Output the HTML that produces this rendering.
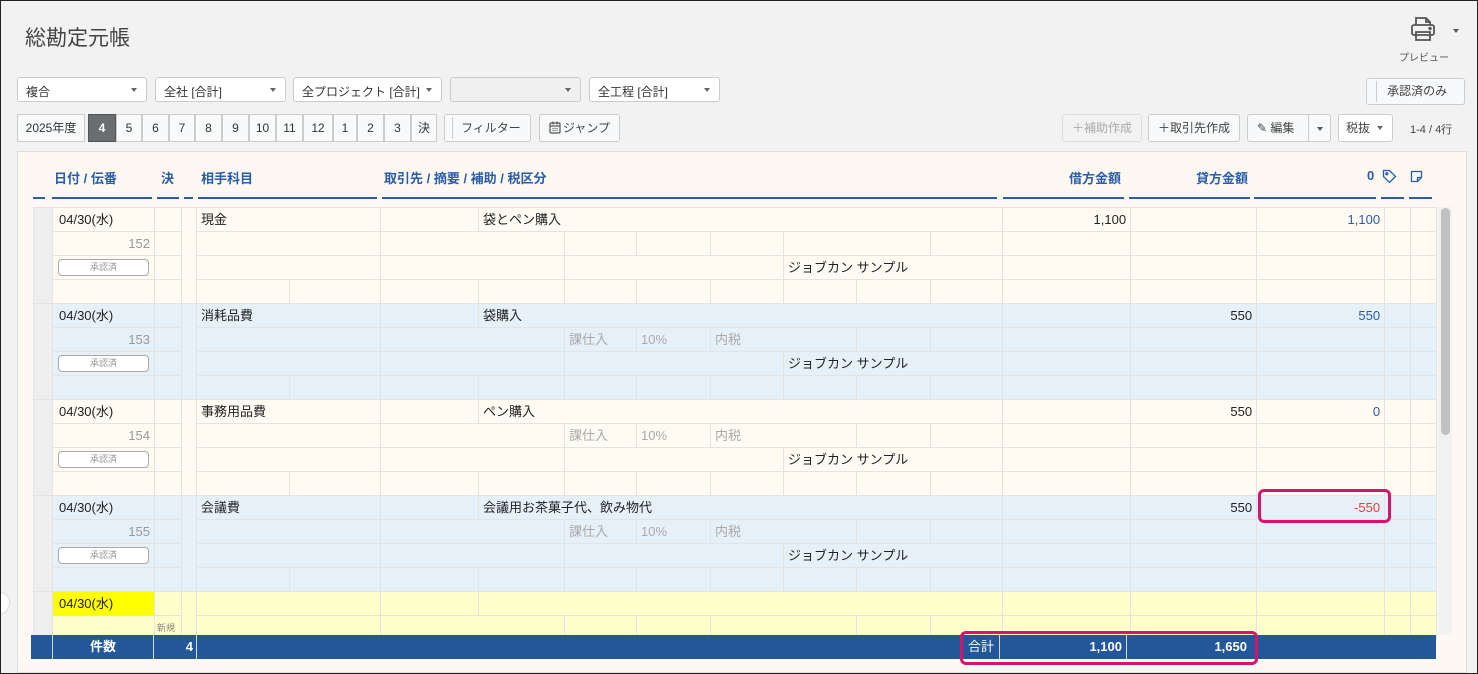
<!DOCTYPE html>
<html><head><meta charset="utf-8"><style>
*{box-sizing:border-box;margin:0;padding:0}
body{width:1478px;height:674px;background:#f2f2f2;font-family:"Liberation Sans","Noto Sans CJK JP",sans-serif;font-size:13px;color:#222;position:relative;overflow:hidden}
.frame{position:absolute;left:0;top:0;width:1478px;height:674px;border:1px solid #222;z-index:10;pointer-events:none}
.abs{position:absolute}
.sel{position:absolute;top:77px;height:25px;background:#fff;border:1px solid #ccc;border-radius:3px;font-size:12px;padding:5px 8px;color:#333}
.sel:after{content:"";position:absolute;right:9px;top:10px;border:3.5px solid transparent;border-top:4px solid #666}
.btn{position:absolute;top:114px;height:28px;background:#f7f9fb;border:1px solid #ccc;border-radius:3px;font-size:12px;color:#444;line-height:26px;text-align:center}
.pg{position:absolute;top:114px;height:28px;border:1px solid #ccc;background:#f7f9fb;font-size:12px;line-height:26px;text-align:center;color:#333}
.panel{position:absolute;left:17px;top:151px;width:1450px;height:522px;background:#fdf9f2;border:1px solid #ddd}
.hd{position:absolute;top:168px;font-weight:bold;color:#2a5ca8;font-size:13px}
.ul{position:absolute;top:197px;height:2px;background:#2a5ca8}
table{position:absolute;left:33px;top:207px;border-collapse:collapse;table-layout:fixed;width:1403px}
td{height:24px;border:1px solid #e3e3e3;padding:0 4px;white-space:nowrap;overflow:hidden;font-size:13px;line-height:18px}
tr.a td{background:#fffaf2}
tr.b td{background:#e6f0f8}
tr.y td{background:#ffffcc}
td.g{background:#eeeeee!important}
td.dt{padding-left:6px}
.r{text-align:right}
.bl{color:#2a5ca8}
.num{color:#999;text-align:right}
.gr{color:#aaa}
.bd{display:block;margin:0 1px;height:17px;border:1px solid #aaa;border-radius:4px;font-size:9px;color:#999;text-align:center;line-height:15px;background:#fff}
.foot{position:absolute;left:31px;top:635px;width:1405px;height:24px;background:#24569a;color:#fff;font-weight:bold;font-size:13px}
.foot div{position:absolute;top:0;height:24px;line-height:24px}
.pink{position:absolute;border:3px solid #d3156b;border-radius:6px}
</style></head><body>
<div class="frame"></div>
<div class="abs" style="left:25px;top:22px;font-size:21px;color:#444">総勘定元帳</div>
<svg class="abs" style="left:1410px;top:15px" width="26" height="28" viewBox="0 0 26 28" fill="none" stroke="#555" stroke-width="1.8"><path d="M6 10V3h10l4 4v3"/><path d="M16 3v4h4"/><rect x="2" y="10" width="22" height="10" rx="2"/><path d="M6 17h14v8H6z"/><circle cx="20" cy="13.5" r="0.8" fill="#555"/></svg>
<div class="abs" style="left:1453px;top:29px;border:3px solid transparent;border-top:4px solid #555"></div>
<div class="abs" style="left:1399px;top:49px;font-size:10px;color:#555">プレビュー</div>
<div class="sel" style="left:17px;width:130px">複合</div>
<div class="sel" style="left:155px;width:131px">全社 [合計]</div>
<div class="sel" style="left:293px;width:149px">全プロジェクト [合計]</div>
<div class="sel" style="left:450px;width:131px;background:#f0f0f0"></div>
<div class="sel" style="left:589px;width:131px">全工程 [合計]</div>
<div class="btn" style="left:1366px;top:78px;width:99px;height:27px;line-height:25px">&nbsp;承認済のみ<span style="position:absolute;left:9px;top:2px;height:21px;border-left:1px solid #ccc"></span></div>
<div class="pg" style="left:17px;width:68px">2025年度</div>
<div class="pg" style="left:88px;width:28px;background:#6b6e71;color:#fff;font-weight:bold;border-color:#555">4</div>
<div class="pg" style="left:116px;width:26px">5</div>
<div class="pg" style="left:142px;width:27px">6</div>
<div class="pg" style="left:169px;width:26px">7</div>
<div class="pg" style="left:195px;width:27px">8</div>
<div class="pg" style="left:222px;width:27px">9</div>
<div class="pg" style="left:249px;width:27px">10</div>
<div class="pg" style="left:276px;width:27px">11</div>
<div class="pg" style="left:303px;width:30px">12</div>
<div class="pg" style="left:333px;width:24px">1</div>
<div class="pg" style="left:357px;width:27px">2</div>
<div class="pg" style="left:384px;width:27px">3</div>
<div class="pg" style="left:411px;width:26px">決</div>
<div class="btn" style="left:444px;width:87px">&nbsp;&nbsp;フィルター<span style="position:absolute;left:7px;top:2px;height:22px;border-left:1px solid #ccc"></span></div>
<div class="btn" style="left:539px;width:81px"><svg width="12" height="13" viewBox="0 0 12 13" fill="none" stroke="#555" stroke-width="1.2" style="vertical-align:-2px;margin-right:2px"><rect x="1" y="2" width="10" height="10" rx="1"/><path d="M1 5h10M4 0.5v3M8 0.5v3M3.5 7.5h1M5.5 7.5h1M7.5 7.5h1M3.5 9.5h1M5.5 9.5h1M7.5 9.5h1"/></svg>ジャンプ</div>
<div class="btn" style="left:1062px;width:80px;color:#aaa;background:#f2f2f2;border-color:#ddd">＋補助作成</div>
<div class="btn" style="left:1148px;width:92px">＋取引先作成</div>
<div class="btn" style="left:1247px;width:84px;text-align:left;padding-left:9px">✎ 編集<span style="position:absolute;left:60px;top:0;height:26px;border-left:1px solid #ccc"></span><span style="position:absolute;left:69px;top:12px;border:3px solid transparent;border-top:4px solid #555"></span></div>
<div class="btn" style="left:1338px;width:55px;text-align:left;padding-left:7px;background:#fff">税抜<span style="position:absolute;left:38px;top:11px;border:3px solid transparent;border-top:4px solid #666"></span></div>
<div class="abs" style="left:1410px;top:121px;font-size:11px;color:#444">1-4 / 4行</div>

<div class="panel"></div>
<div class="hd" style="left:54px">日付 / 伝番</div>
<div class="hd" style="left:161px">決</div>
<div class="hd" style="left:201px">相手科目</div>
<div class="hd" style="left:384px">取引先 / 摘要 / 補助 / 税区分</div>
<div class="hd" style="left:1069px">借方金額</div>
<div class="hd" style="left:1196px">貸方金額</div>
<div class="hd" style="left:1367px">0</div>
<svg class="abs" style="left:1382px;top:169px" width="15" height="15" viewBox="0 0 15 15" fill="none" stroke="#2a5ca8" stroke-width="1.3"><path d="M1.5 1.5h6l6 6-6 6-6-6z"/><circle cx="4.8" cy="4.8" r="1"/></svg>
<svg class="abs" style="left:1410px;top:170px" width="13" height="13" viewBox="0 0 13 13" fill="none" stroke="#2a5ca8" stroke-width="1.3"><path d="M1.5 1.5h10v6l-4 4h-6z M7.5 11.5v-4h4"/></svg>
<div class="ul" style="left:33px;width:12px"></div>
<div class="ul" style="left:52px;width:100px"></div>
<div class="ul" style="left:157px;width:22px"></div>
<div class="ul" style="left:184px;width:9px"></div>
<div class="ul" style="left:198px;width:179px"></div>
<div class="ul" style="left:382px;width:615px"></div>
<div class="ul" style="left:1003px;width:121px"></div>
<div class="ul" style="left:1129px;width:121px"></div>
<div class="ul" style="left:1254px;width:122px"></div>
<div class="ul" style="left:1381px;width:23px"></div>
<div class="ul" style="left:1409px;width:23px"></div>

<table>
<colgroup><col style="width:19px"><col style="width:102px"><col style="width:27px"><col style="width:15px"><col style="width:93px"><col style="width:91px"><col style="width:98px"><col style="width:86px"><col style="width:72px"><col style="width:74px"><col style="width:73px"><col style="width:73px"><col style="width:74px"><col style="width:72px"><col style="width:128px"><col style="width:126px"><col style="width:128px"><col style="width:26px"><col style="width:26px"></colgroup>

<tr class="a"><td class="g" rowspan="4"></td><td class="dt">04/30(水)</td><td></td><td rowspan="4"></td><td colspan="2">現金</td><td></td><td colspan="7">袋とペン購入</td><td class="r">1,100</td><td></td><td class="r bl">1,100</td><td></td><td></td></tr>
<tr class="a"><td class="num">152</td><td></td><td colspan="2"></td><td colspan="2"></td><td></td><td></td><td></td><td colspan="2"></td><td></td><td></td><td></td><td></td><td></td><td></td></tr>
<tr class="a"><td><span class="bd">承認済</span></td><td></td><td colspan="2"></td><td colspan="2"></td><td colspan="3"></td><td colspan="3">ジョブカン サンプル</td><td></td><td></td><td></td><td></td><td></td></tr>
<tr class="a"><td></td><td></td><td></td><td></td><td></td><td></td><td></td><td></td><td></td><td></td><td></td><td></td><td></td><td></td><td></td><td></td><td></td></tr>

<tr class="b"><td class="g" rowspan="4"></td><td class="dt">04/30(水)</td><td></td><td rowspan="4"></td><td colspan="2">消耗品費</td><td></td><td colspan="7">袋購入</td><td></td><td class="r">550</td><td class="r bl">550</td><td></td><td></td></tr>
<tr class="b"><td class="num">153</td><td></td><td colspan="2"></td><td colspan="2"></td><td class="gr">課仕入</td><td class="gr">10%</td><td colspan="2" class="gr">内税</td><td></td><td></td><td></td><td></td><td></td><td></td><td></td></tr>
<tr class="b"><td><span class="bd">承認済</span></td><td></td><td colspan="2"></td><td colspan="2"></td><td colspan="3"></td><td colspan="3">ジョブカン サンプル</td><td></td><td></td><td></td><td></td><td></td></tr>
<tr class="b"><td></td><td></td><td></td><td></td><td></td><td></td><td></td><td></td><td></td><td></td><td></td><td></td><td></td><td></td><td></td><td></td><td></td></tr>

<tr class="a"><td class="g" rowspan="4"></td><td class="dt">04/30(水)</td><td></td><td rowspan="4"></td><td colspan="2">事務用品費</td><td></td><td colspan="7">ペン購入</td><td></td><td class="r">550</td><td class="r bl">0</td><td></td><td></td></tr>
<tr class="a"><td class="num">154</td><td></td><td colspan="2"></td><td colspan="2"></td><td class="gr">課仕入</td><td class="gr">10%</td><td colspan="2" class="gr">内税</td><td></td><td></td><td></td><td></td><td></td><td></td><td></td></tr>
<tr class="a"><td><span class="bd">承認済</span></td><td></td><td colspan="2"></td><td colspan="2"></td><td colspan="3"></td><td colspan="3">ジョブカン サンプル</td><td></td><td></td><td></td><td></td><td></td></tr>
<tr class="a"><td></td><td></td><td></td><td></td><td></td><td></td><td></td><td></td><td></td><td></td><td></td><td></td><td></td><td></td><td></td><td></td><td></td></tr>

<tr class="b"><td class="g" rowspan="4"></td><td class="dt">04/30(水)</td><td></td><td rowspan="4"></td><td colspan="2">会議費</td><td></td><td colspan="7">会議用お茶菓子代、飲み物代</td><td></td><td class="r">550</td><td class="r" style="color:#f03a3a">-550</td><td></td><td></td></tr>
<tr class="b"><td class="num">155</td><td></td><td colspan="2"></td><td colspan="2"></td><td class="gr">課仕入</td><td class="gr">10%</td><td colspan="2" class="gr">内税</td><td></td><td></td><td></td><td></td><td></td><td></td><td></td></tr>
<tr class="b"><td><span class="bd">承認済</span></td><td></td><td colspan="2"></td><td colspan="2"></td><td colspan="3"></td><td colspan="3">ジョブカン サンプル</td><td></td><td></td><td></td><td></td><td></td></tr>
<tr class="b"><td></td><td></td><td></td><td></td><td></td><td></td><td></td><td></td><td></td><td></td><td></td><td></td><td></td><td></td><td></td><td></td><td></td></tr>

<tr class="y"><td class="g" rowspan="2"></td><td class="dt" style="background:#ffff00">04/30(水)</td><td></td><td rowspan="2"></td><td colspan="2"></td><td></td><td colspan="7"></td><td></td><td></td><td></td><td></td><td></td></tr>
<tr class="y"><td style="height:22px"></td><td style="font-size:9px;color:#888;padding:0 2px">新規</td><td colspan="2"></td><td colspan="2"></td><td></td><td></td><td colspan="2"></td><td></td><td></td><td></td><td></td><td></td><td></td><td></td></tr>
</table>

<div class="abs" style="left:1438px;top:207px;width:14px;height:428px;background:#f1f1f1"></div>
<div class="abs" style="left:1441px;top:208px;width:9px;height:227px;background:#c1c1c1;border-radius:5px"></div>
<div class="abs" style="left:-10px;top:592px;width:20px;height:22px;border-radius:50%;background:#fff;border:1px solid #ddd"></div>

<div class="foot">
<div style="left:21px;width:102px;text-align:center;border-left:1px solid #cfd9e8;border-right:1px solid #cfd9e8">件数</div>
<div style="left:123px;width:43px;text-align:right;padding-right:3px;border-right:1px solid #cfd9e8">4</div>
<div style="left:937px;width:32px;font-weight:normal;border-right:1px solid #cfd9e8">合計</div>
<div style="left:969px;width:127px;text-align:right;padding-right:4px;border-right:1px solid #cfd9e8">1,100</div>
<div style="left:1096px;width:124px;text-align:right;padding-right:4px">1,650</div>
</div>
<div class="pink" style="left:1258px;top:489px;width:133px;height:34px"></div>
<div class="pink" style="left:960px;top:631px;width:298px;height:34px"></div>
</body></html>
